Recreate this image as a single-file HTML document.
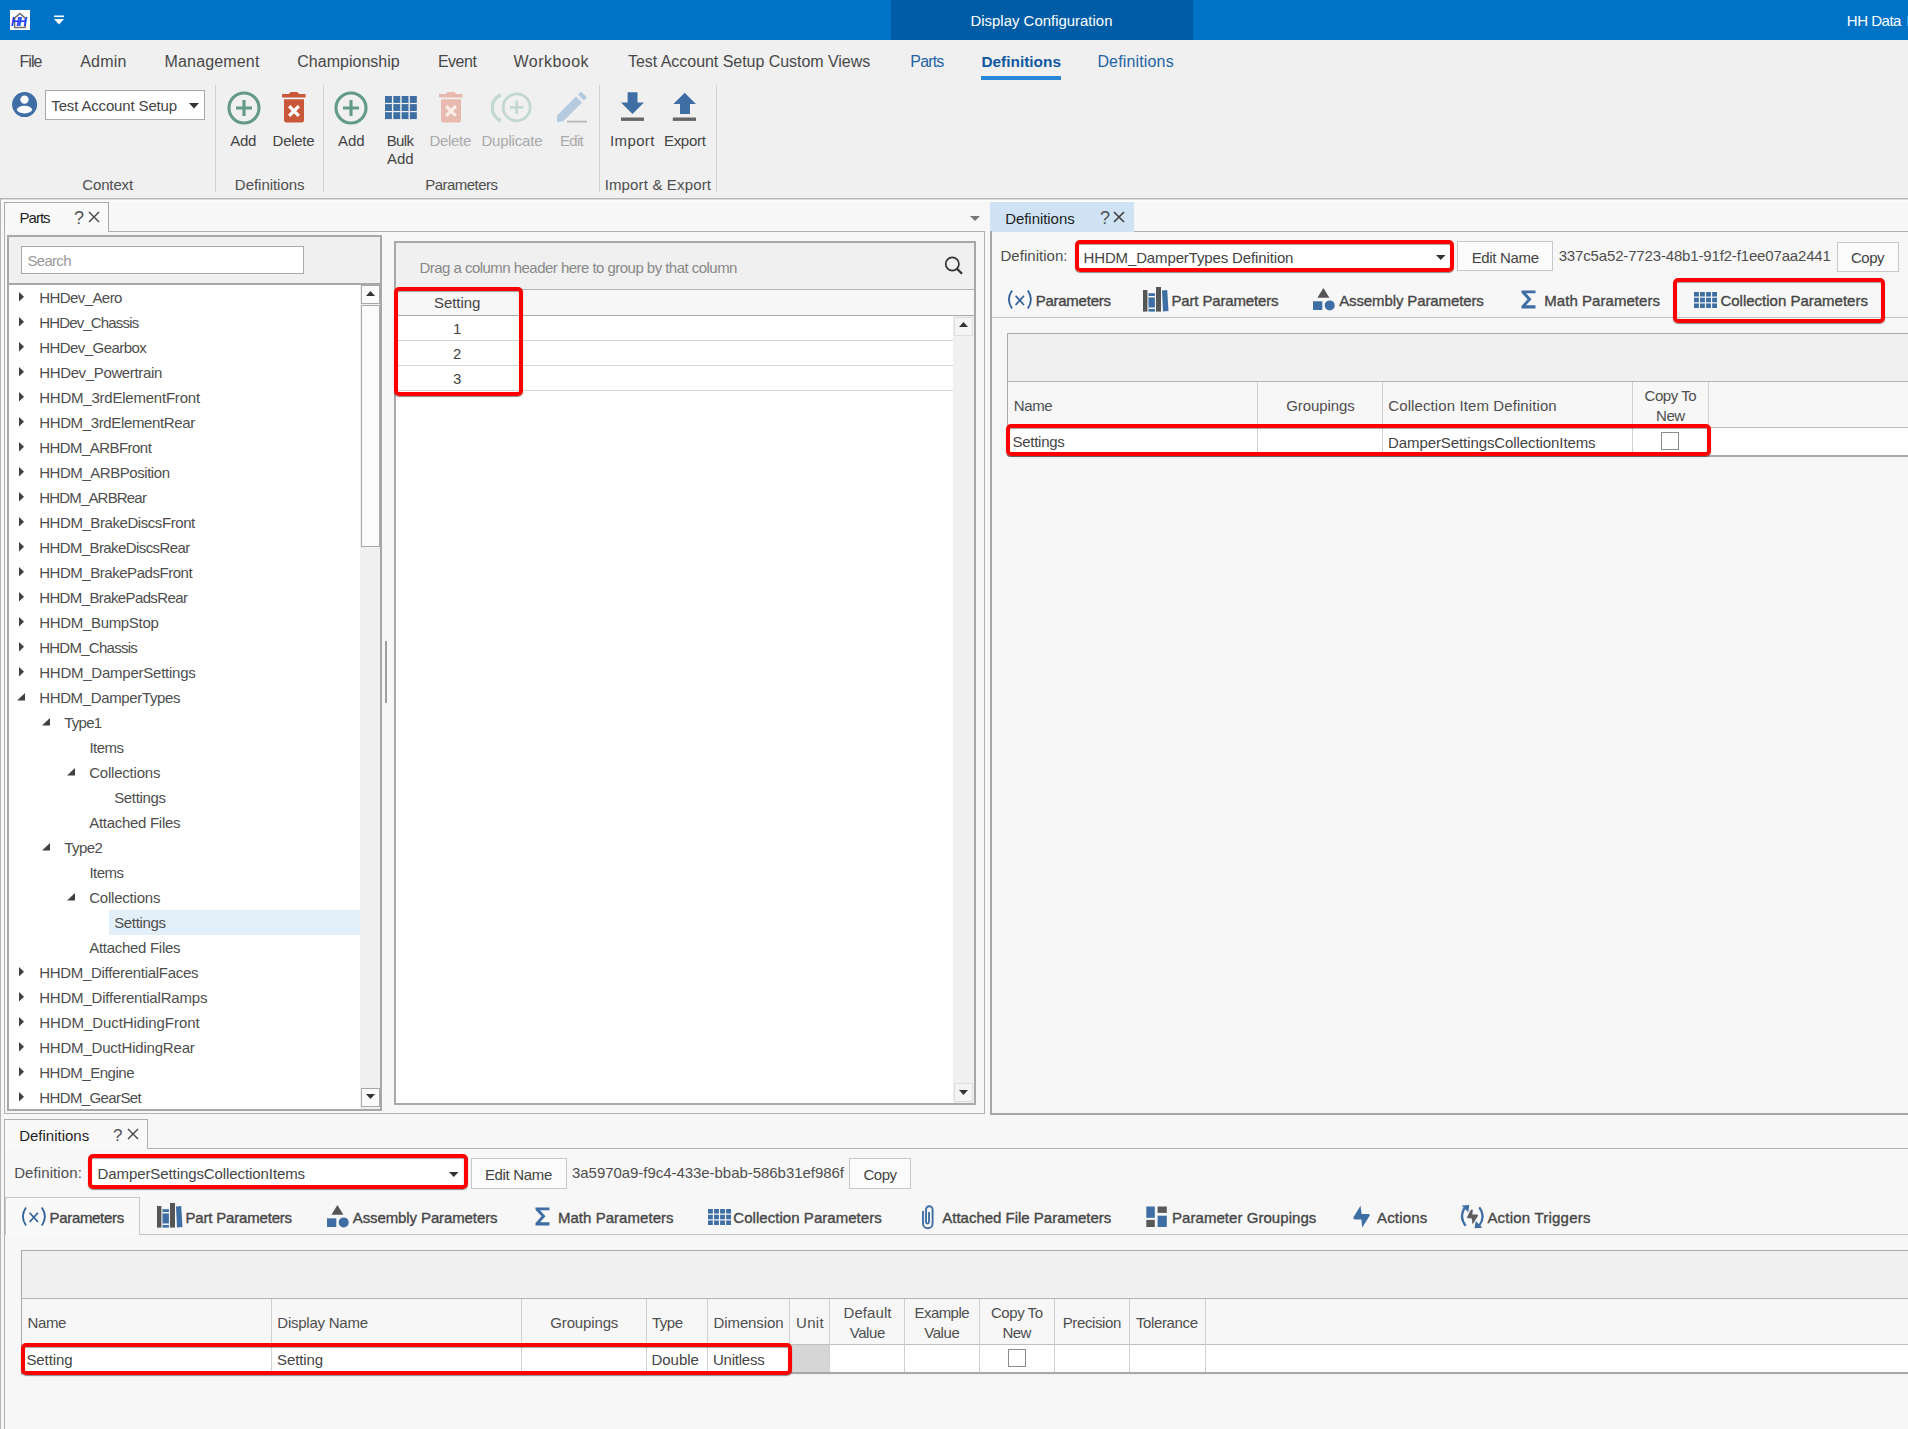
<!DOCTYPE html>
<html><head><meta charset="utf-8"><title>Display Configuration</title>
<style>
html,body{margin:0;padding:0;width:1908px;height:1429px;overflow:hidden;background:#f7f7f7;}
body{position:relative;font-family:"Liberation Sans",sans-serif;}
body>div,body>span,body>svg{position:absolute;display:block;}
body>span{white-space:nowrap;}
svg text{font-family:"Liberation Sans",sans-serif;}
</style></head><body>
<div style="left:0px;top:0px;width:1908px;height:40px;background:#0173c7"></div>
<div style="left:891px;top:0px;width:302px;height:40px;background:#005ca5"></div>
<svg style="left:10px;top:10px" width="20" height="20" viewBox="0 0 20 20"><rect x="0" y="0" width="20" height="20" fill="#fff"/><path d="M4.6 17.6 V8.2 L9.9 3.4 L15.2 8.2 V17.6 Z" fill="none" stroke="#707070" stroke-width="1.5"/><text x="1" y="15.5" font-family="Liberation Sans" font-size="12" font-weight="bold" font-style="italic" fill="#1a3cff" letter-spacing="-1.5">HH</text></svg>
<svg style="left:53px;top:15px" width="12" height="10" viewBox="0 0 12 10"><rect x="1" y="0.5" width="10" height="1.6" fill="#fff"/><path d="M1 4 L11 4 L6 9.5 Z" fill="#fff"/></svg>
<span style="left:970.50px;top:14px;font-size:14.9px;line-height:14.9px;color:#fff;letter-spacing:0.019px;">Display Configuration</span>
<span style="left:1846.80px;top:13px;font-size:15px;line-height:15px;color:#fff;letter-spacing:-0.483px;">HH Data</span>
<span style="left:1906.50px;top:13px;font-size:15px;line-height:15px;color:#fff;">M</span>
<div style="left:0px;top:40px;width:1908px;height:158px;background:#f0f0f0"></div>
<span style="left:19.50px;top:54px;font-size:16px;line-height:16px;color:#484848;letter-spacing:-0.920px;">File</span>
<span style="left:80.20px;top:54px;font-size:16px;line-height:16px;color:#484848;letter-spacing:0.235px;">Admin</span>
<span style="left:164.60px;top:54px;font-size:16px;line-height:16px;color:#484848;letter-spacing:0.149px;">Management</span>
<span style="left:297.30px;top:54px;font-size:16px;line-height:16px;color:#484848;letter-spacing:0.016px;">Championship</span>
<span style="left:437.90px;top:54px;font-size:16px;line-height:16px;color:#484848;letter-spacing:-0.470px;">Event</span>
<span style="left:513.60px;top:54px;font-size:16px;line-height:16px;color:#484848;letter-spacing:0.451px;">Workbook</span>
<span style="left:628.00px;top:54px;font-size:16px;line-height:16px;color:#484848;letter-spacing:-0.039px;">Test Account Setup Custom Views</span>
<span style="left:910.30px;top:54px;font-size:16px;line-height:16px;color:#1f63a6;letter-spacing:-0.840px;">Parts</span>
<span style="left:981.40px;top:54px;font-size:15.4px;line-height:15.4px;color:#10589f;font-weight:bold;letter-spacing:0.006px;">Definitions</span>
<div style="left:981px;top:76px;width:80px;height:4px;background:#2b88d8"></div>
<span style="left:1097.40px;top:54px;font-size:16px;line-height:16px;color:#1f63a6;letter-spacing:0.158px;">Definitions</span>
<div style="left:215px;top:85px;width:1px;height:107px;background:#d2d2d2"></div>
<div style="left:323px;top:85px;width:1px;height:107px;background:#d2d2d2"></div>
<div style="left:599px;top:85px;width:1px;height:107px;background:#d2d2d2"></div>
<div style="left:716px;top:85px;width:1px;height:107px;background:#d2d2d2"></div>
<div style="left:0px;top:198px;width:1908px;height:1px;background:#b6b6b6"></div>
<div style="left:0px;top:199px;width:1908px;height:1px;background:#dadada"></div>
<svg style="left:12px;top:92px" width="26" height="26" viewBox="0 0 26 26"><circle cx="12.6" cy="12.6" r="12.5" fill="#3e6ea3"/><circle cx="12.5" cy="7.6" r="4.2" fill="#fff"/><ellipse cx="12.5" cy="17.6" rx="7.6" ry="3.8" fill="#fff"/></svg>
<div style="left:45px;top:90px;width:158px;height:28px;background:#fff;border:1px solid #a9a9a9"></div>
<span style="left:51.30px;top:98px;font-size:15px;line-height:15px;color:#444;letter-spacing:-0.153px;">Test Account Setup</span>
<svg style="left:189px;top:103px" width="10" height="6" viewBox="0 0 10 6"><path d="M0 0 H10 L5 5.5 Z" fill="#333"/></svg>
<span style="left:82.35px;top:177px;font-size:15px;line-height:15px;color:#4e4e4e;letter-spacing:-0.162px;">Context</span>
<svg style="left:226.7px;top:90.6px" width="34" height="34" viewBox="0 0 34 34"><circle cx="17" cy="17" r="15" fill="none" stroke="#649a88" stroke-width="3.1"/><path d="M17 9 V25 M9 17 H25" stroke="#649a88" stroke-width="3.1"/></svg>
<svg style="left:282px;top:92px" width="25" height="32" viewBox="0 0 25 32"><path d="M0 1.9 H23.6 V5.6 H0 Z M6.5 2 L9 0 H15 L17.5 2 Z" fill="#c9573a"/><path d="M2 7.2 H22 V28 Q22 30.5 19.5 30.5 H4.5 Q2 30.5 2 28 Z" fill="#c9573a"/><path d="M7.2 14.2 L16.8 23.8 M16.8 14.2 L7.2 23.8" stroke="#fff" stroke-width="3.3"/></svg>
<span style="left:230.30px;top:133px;font-size:15px;line-height:15px;color:#444;letter-spacing:-0.350px;">Add</span>
<span style="left:272.60px;top:133px;font-size:15px;line-height:15px;color:#444;letter-spacing:-0.270px;">Delete</span>
<span style="left:234.85px;top:177px;font-size:15px;line-height:15px;color:#4e4e4e;letter-spacing:-0.035px;">Definitions</span>
<svg style="left:334.4px;top:90.6px" width="34" height="34" viewBox="0 0 34 34"><circle cx="17" cy="17" r="15" fill="none" stroke="#649a88" stroke-width="3.1"/><path d="M17 9 V25 M9 17 H25" stroke="#649a88" stroke-width="3.1"/></svg>
<svg style="left:385px;top:96px" width="33" height="24" viewBox="0 0 33 24"><rect x="0.0" y="0.0" width="6.9" height="6.9" fill="#3e6ea3"/><rect x="8.3" y="0.0" width="6.9" height="6.9" fill="#3e6ea3"/><rect x="16.6" y="0.0" width="6.9" height="6.9" fill="#3e6ea3"/><rect x="24.9" y="0.0" width="6.9" height="6.9" fill="#3e6ea3"/><rect x="0.0" y="8.1" width="6.9" height="6.9" fill="#3e6ea3"/><rect x="8.3" y="8.1" width="6.9" height="6.9" fill="#3e6ea3"/><rect x="16.6" y="8.1" width="6.9" height="6.9" fill="#3e6ea3"/><rect x="24.9" y="8.1" width="6.9" height="6.9" fill="#3e6ea3"/><rect x="0.0" y="16.2" width="6.9" height="6.9" fill="#3e6ea3"/><rect x="8.3" y="16.2" width="6.9" height="6.9" fill="#3e6ea3"/><rect x="16.6" y="16.2" width="6.9" height="6.9" fill="#3e6ea3"/><rect x="24.9" y="16.2" width="6.9" height="6.9" fill="#3e6ea3"/></svg>
<svg style="left:439px;top:92px" width="25" height="32" viewBox="0 0 25 32"><path d="M0 1.9 H23.6 V5.6 H0 Z M6.5 2 L9 0 H15 L17.5 2 Z" fill="#e8b9ae"/><path d="M2 7.2 H22 V28 Q22 30.5 19.5 30.5 H4.5 Q2 30.5 2 28 Z" fill="#e8b9ae"/><path d="M7.2 14.2 L16.8 23.8 M16.8 14.2 L7.2 23.8" stroke="#fbeee9" stroke-width="3.3"/></svg>
<svg style="left:491px;top:91px" width="42" height="34" viewBox="0 0 42 34"><path d="M10 3.8 A14 14 0 0 0 10 29.8" fill="none" stroke="#c3d8d0" stroke-width="3.4"/><circle cx="25.7" cy="16.3" r="13.5" fill="none" stroke="#c3d8d0" stroke-width="2.8"/><path d="M25.7 9.5 V23 M19 16.3 H32.5" stroke="#c3d8d0" stroke-width="2.8"/></svg>
<svg style="left:556px;top:92px" width="32" height="32" viewBox="0 0 32 32"><path d="M1 23.5 L20 4.5 L26 10.5 L7 29.5 L1 30 Z" fill="#b6cadf"/><path d="M22 2.5 L25 -0.5 L31 5.5 L28 8.5 Z" fill="#b6cadf"/><rect x="11" y="28.7" width="20" height="1.8" fill="#b9b9b9"/></svg>
<span style="left:338.00px;top:133px;font-size:15px;line-height:15px;color:#444;letter-spacing:-0.050px;">Add</span>
<span style="left:386.75px;top:133px;font-size:15px;line-height:15px;color:#444;letter-spacing:-0.650px;">Bulk</span>
<span style="left:387.10px;top:151px;font-size:15px;line-height:15px;color:#444;letter-spacing:-0.050px;">Add</span>
<span style="left:429.50px;top:133px;font-size:15px;line-height:15px;color:#aaa;letter-spacing:-0.310px;">Delete</span>
<span style="left:481.40px;top:133px;font-size:15px;line-height:15px;color:#aaa;letter-spacing:-0.169px;">Duplicate</span>
<span style="left:560.05px;top:133px;font-size:15px;line-height:15px;color:#aaa;letter-spacing:-0.725px;">Edit</span>
<span style="left:425.20px;top:177px;font-size:15px;line-height:15px;color:#4e4e4e;letter-spacing:-0.528px;">Parameters</span>
<svg style="left:620px;top:92px" width="26" height="30" viewBox="0 0 26 30"><path d="M7.6 0.2 H17.5 V10.5 H23.9 L12.5 21.9 L1 10.5 H7.6 Z" fill="#3e6ea3"/><rect x="1" y="25.5" width="23" height="3.4" fill="#666"/></svg>
<svg style="left:672px;top:92px" width="26" height="30" viewBox="0 0 26 30"><path d="M12.7 0.8 L24 12 H18 V21.9 H8 V12 H1.4 Z" fill="#3e6ea3"/><rect x="0.8" y="25.5" width="23.2" height="3.4" fill="#666"/></svg>
<span style="left:610.00px;top:133px;font-size:15px;line-height:15px;color:#444;letter-spacing:0.375px;">Import</span>
<span style="left:663.95px;top:133px;font-size:15px;line-height:15px;color:#444;letter-spacing:-0.290px;">Export</span>
<span style="left:604.65px;top:177px;font-size:15px;line-height:15px;color:#4e4e4e;letter-spacing:0.152px;">Import & Export</span>
<div style="left:0px;top:200px;width:1908px;height:1229px;background:#f7f7f7"></div>
<div style="left:0px;top:200px;width:1908px;height:2px;background:#fcfcfc"></div>
<div style="left:0px;top:199px;width:1px;height:1230px;background:#b4b4b4"></div>
<div style="left:4px;top:202px;width:105px;height:30px;background:#f9f9f9;border:1px solid #a8a8a8;border-bottom:none;box-sizing:border-box"></div>
<span style="left:19.60px;top:210px;font-size:15px;line-height:15px;color:#1e1e1e;letter-spacing:-1.006px;">Parts</span>
<span style="left:74.00px;top:209px;font-size:18px;line-height:18px;color:#505050;">?</span>
<svg style="left:88px;top:211px" width="12" height="12" viewBox="0 0 12 12"><path d="M1 1 L11 11 M11 1 L1 11" stroke="#444" stroke-width="1.4"/></svg>
<div style="left:108px;top:231px;width:877px;height:1px;background:#b0b0b0"></div>
<div style="left:4px;top:231px;width:1px;height:883px;background:#b0b0b0"></div>
<div style="left:984px;top:231px;width:1px;height:883px;background:#b0b0b0"></div>
<div style="left:4px;top:1113px;width:981px;height:1px;background:#b0b0b0"></div>
<svg style="left:970px;top:216px" width="10" height="6" viewBox="0 0 10 6"><path d="M0 0 H10 L5 5 Z" fill="#777"/></svg>
<div style="left:7px;top:235px;width:375px;height:876px;background:#f0f0f0;border:2px solid #a8a8a8;box-sizing:border-box"></div>
<div style="left:9px;top:284px;width:351px;height:825px;background:#fff"></div>
<div style="left:9px;top:283px;width:372px;height:2px;background:#a8a8a8"></div>
<div style="left:21px;top:246px;width:283px;height:28px;background:#fff;border:1px solid #a9a9a9;box-sizing:border-box"></div>
<span style="left:27.50px;top:253px;font-size:15px;line-height:15px;color:#999;letter-spacing:-0.710px;">Search</span>
<div style="left:360px;top:285px;width:20px;height:824px;background:#f0f0f0"></div>
<div style="left:361px;top:285px;width:19px;height:19px;background:#fbfbfb;border:1px solid #a8a8a8;box-sizing:border-box"></div>
<svg style="left:366px;top:291px" width="10" height="6" viewBox="0 0 10 6"><path d="M0 5 H9 L4.5 0 Z" fill="#333"/></svg>
<div style="left:361px;top:305px;width:19px;height:242px;background:#fbfbfb;border:1px solid #a8a8a8;box-sizing:border-box"></div>
<div style="left:361px;top:1088px;width:19px;height:19px;background:#fbfbfb;border:1px solid #a8a8a8;box-sizing:border-box"></div>
<svg style="left:366px;top:1094px" width="10" height="6" viewBox="0 0 10 6"><path d="M0 0 H9 L4.5 5 Z" fill="#333"/></svg>
<div style="left:385px;top:641px;width:2px;height:62px;background:#a0a0a0"></div>
<svg style="left:19px;top:291.5px" width="6" height="10" viewBox="0 0 6 10"><path d="M0 0 L5 4.7 L0 9.5 Z" fill="#404040"/></svg>
<span style="left:39.20px;top:290px;font-size:15px;line-height:15px;color:#4e4e4e;letter-spacing:-0.572px;">HHDev_Aero</span>
<svg style="left:19px;top:316.5px" width="6" height="10" viewBox="0 0 6 10"><path d="M0 0 L5 4.7 L0 9.5 Z" fill="#404040"/></svg>
<span style="left:39.20px;top:315px;font-size:15px;line-height:15px;color:#4e4e4e;letter-spacing:-0.835px;">HHDev_Chassis</span>
<svg style="left:19px;top:341.5px" width="6" height="10" viewBox="0 0 6 10"><path d="M0 0 L5 4.7 L0 9.5 Z" fill="#404040"/></svg>
<span style="left:39.20px;top:340px;font-size:15px;line-height:15px;color:#4e4e4e;letter-spacing:-0.544px;">HHDev_Gearbox</span>
<svg style="left:19px;top:366.5px" width="6" height="10" viewBox="0 0 6 10"><path d="M0 0 L5 4.7 L0 9.5 Z" fill="#404040"/></svg>
<span style="left:39.20px;top:365px;font-size:15px;line-height:15px;color:#4e4e4e;letter-spacing:-0.353px;">HHDev_Powertrain</span>
<svg style="left:19px;top:391.5px" width="6" height="10" viewBox="0 0 6 10"><path d="M0 0 L5 4.7 L0 9.5 Z" fill="#404040"/></svg>
<span style="left:39.20px;top:390px;font-size:15px;line-height:15px;color:#4e4e4e;letter-spacing:-0.220px;">HHDM_3rdElementFront</span>
<svg style="left:19px;top:416.5px" width="6" height="10" viewBox="0 0 6 10"><path d="M0 0 L5 4.7 L0 9.5 Z" fill="#404040"/></svg>
<span style="left:39.20px;top:415px;font-size:15px;line-height:15px;color:#4e4e4e;letter-spacing:-0.363px;">HHDM_3rdElementRear</span>
<svg style="left:19px;top:441.5px" width="6" height="10" viewBox="0 0 6 10"><path d="M0 0 L5 4.7 L0 9.5 Z" fill="#404040"/></svg>
<span style="left:39.20px;top:440px;font-size:15px;line-height:15px;color:#4e4e4e;letter-spacing:-0.548px;">HHDM_ARBFront</span>
<svg style="left:19px;top:466.5px" width="6" height="10" viewBox="0 0 6 10"><path d="M0 0 L5 4.7 L0 9.5 Z" fill="#404040"/></svg>
<span style="left:39.20px;top:465px;font-size:15px;line-height:15px;color:#4e4e4e;letter-spacing:-0.450px;">HHDM_ARBPosition</span>
<svg style="left:19px;top:491.5px" width="6" height="10" viewBox="0 0 6 10"><path d="M0 0 L5 4.7 L0 9.5 Z" fill="#404040"/></svg>
<span style="left:39.20px;top:490px;font-size:15px;line-height:15px;color:#4e4e4e;letter-spacing:-0.818px;">HHDM_ARBRear</span>
<svg style="left:19px;top:516.5px" width="6" height="10" viewBox="0 0 6 10"><path d="M0 0 L5 4.7 L0 9.5 Z" fill="#404040"/></svg>
<span style="left:39.20px;top:515px;font-size:15px;line-height:15px;color:#4e4e4e;letter-spacing:-0.430px;">HHDM_BrakeDiscsFront</span>
<svg style="left:19px;top:541.5px" width="6" height="10" viewBox="0 0 6 10"><path d="M0 0 L5 4.7 L0 9.5 Z" fill="#404040"/></svg>
<span style="left:39.20px;top:540px;font-size:15px;line-height:15px;color:#4e4e4e;letter-spacing:-0.594px;">HHDM_BrakeDiscsRear</span>
<svg style="left:19px;top:566.5px" width="6" height="10" viewBox="0 0 6 10"><path d="M0 0 L5 4.7 L0 9.5 Z" fill="#404040"/></svg>
<span style="left:39.20px;top:565px;font-size:15px;line-height:15px;color:#4e4e4e;letter-spacing:-0.461px;">HHDM_BrakePadsFront</span>
<svg style="left:19px;top:591.5px" width="6" height="10" viewBox="0 0 6 10"><path d="M0 0 L5 4.7 L0 9.5 Z" fill="#404040"/></svg>
<span style="left:39.20px;top:590px;font-size:15px;line-height:15px;color:#4e4e4e;letter-spacing:-0.619px;">HHDM_BrakePadsRear</span>
<svg style="left:19px;top:616.5px" width="6" height="10" viewBox="0 0 6 10"><path d="M0 0 L5 4.7 L0 9.5 Z" fill="#404040"/></svg>
<span style="left:39.20px;top:615px;font-size:15px;line-height:15px;color:#4e4e4e;letter-spacing:-0.315px;">HHDM_BumpStop</span>
<svg style="left:19px;top:641.5px" width="6" height="10" viewBox="0 0 6 10"><path d="M0 0 L5 4.7 L0 9.5 Z" fill="#404040"/></svg>
<span style="left:39.20px;top:640px;font-size:15px;line-height:15px;color:#4e4e4e;letter-spacing:-0.739px;">HHDM_Chassis</span>
<svg style="left:19px;top:666.5px" width="6" height="10" viewBox="0 0 6 10"><path d="M0 0 L5 4.7 L0 9.5 Z" fill="#404040"/></svg>
<span style="left:39.20px;top:665px;font-size:15px;line-height:15px;color:#4e4e4e;letter-spacing:-0.237px;">HHDM_DamperSettings</span>
<svg style="left:17px;top:692.5px" width="9" height="8" viewBox="0 0 9 8"><path d="M8 0 V7.5 H0 Z" fill="#404040"/></svg>
<span style="left:39.20px;top:690px;font-size:15px;line-height:15px;color:#4e4e4e;letter-spacing:-0.360px;">HHDM_DamperTypes</span>
<svg style="left:42px;top:717.5px" width="9" height="8" viewBox="0 0 9 8"><path d="M8 0 V7.5 H0 Z" fill="#404040"/></svg>
<span style="left:64.20px;top:715px;font-size:15px;line-height:15px;color:#4e4e4e;letter-spacing:-0.744px;">Type1</span>
<span style="left:89.50px;top:740px;font-size:15px;line-height:15px;color:#4e4e4e;letter-spacing:-0.544px;">Items</span>
<svg style="left:67px;top:767.5px" width="9" height="8" viewBox="0 0 9 8"><path d="M8 0 V7.5 H0 Z" fill="#404040"/></svg>
<span style="left:89.20px;top:765px;font-size:15px;line-height:15px;color:#4e4e4e;letter-spacing:-0.215px;">Collections</span>
<span style="left:114.20px;top:790px;font-size:15px;line-height:15px;color:#4e4e4e;letter-spacing:-0.346px;">Settings</span>
<span style="left:89.20px;top:815px;font-size:15px;line-height:15px;color:#4e4e4e;letter-spacing:-0.287px;">Attached Files</span>
<svg style="left:42px;top:842.5px" width="9" height="8" viewBox="0 0 9 8"><path d="M8 0 V7.5 H0 Z" fill="#404040"/></svg>
<span style="left:64.20px;top:840px;font-size:15px;line-height:15px;color:#4e4e4e;letter-spacing:-0.569px;">Type2</span>
<span style="left:89.50px;top:865px;font-size:15px;line-height:15px;color:#4e4e4e;letter-spacing:-0.544px;">Items</span>
<svg style="left:67px;top:892.5px" width="9" height="8" viewBox="0 0 9 8"><path d="M8 0 V7.5 H0 Z" fill="#404040"/></svg>
<span style="left:89.20px;top:890px;font-size:15px;line-height:15px;color:#4e4e4e;letter-spacing:-0.215px;">Collections</span>
<div style="left:109px;top:910px;width:251px;height:25px;background:#e3eff9"></div>
<span style="left:114.20px;top:915px;font-size:15px;line-height:15px;color:#4e4e4e;letter-spacing:-0.346px;">Settings</span>
<span style="left:89.20px;top:940px;font-size:15px;line-height:15px;color:#4e4e4e;letter-spacing:-0.287px;">Attached Files</span>
<svg style="left:19px;top:966.5px" width="6" height="10" viewBox="0 0 6 10"><path d="M0 0 L5 4.7 L0 9.5 Z" fill="#404040"/></svg>
<span style="left:39.20px;top:965px;font-size:15px;line-height:15px;color:#4e4e4e;letter-spacing:-0.300px;">HHDM_DifferentialFaces</span>
<svg style="left:19px;top:991.5px" width="6" height="10" viewBox="0 0 6 10"><path d="M0 0 L5 4.7 L0 9.5 Z" fill="#404040"/></svg>
<span style="left:39.20px;top:990px;font-size:15px;line-height:15px;color:#4e4e4e;letter-spacing:-0.194px;">HHDM_DifferentialRamps</span>
<svg style="left:19px;top:1016.5px" width="6" height="10" viewBox="0 0 6 10"><path d="M0 0 L5 4.7 L0 9.5 Z" fill="#404040"/></svg>
<span style="left:39.20px;top:1015px;font-size:15px;line-height:15px;color:#4e4e4e;letter-spacing:-0.068px;">HHDM_DuctHidingFront</span>
<svg style="left:19px;top:1041.5px" width="6" height="10" viewBox="0 0 6 10"><path d="M0 0 L5 4.7 L0 9.5 Z" fill="#404040"/></svg>
<span style="left:39.20px;top:1040px;font-size:15px;line-height:15px;color:#4e4e4e;letter-spacing:-0.201px;">HHDM_DuctHidingRear</span>
<svg style="left:19px;top:1066.5px" width="6" height="10" viewBox="0 0 6 10"><path d="M0 0 L5 4.7 L0 9.5 Z" fill="#404040"/></svg>
<span style="left:39.20px;top:1065px;font-size:15px;line-height:15px;color:#4e4e4e;letter-spacing:-0.475px;">HHDM_Engine</span>
<svg style="left:19px;top:1091.5px" width="6" height="10" viewBox="0 0 6 10"><path d="M0 0 L5 4.7 L0 9.5 Z" fill="#404040"/></svg>
<span style="left:39.20px;top:1090px;font-size:15px;line-height:15px;color:#4e4e4e;letter-spacing:-0.600px;">HHDM_GearSet</span>
<div style="left:394px;top:241px;width:582px;height:864px;background:#fff;border:2px solid #a8a8a8;box-sizing:border-box"></div>
<div style="left:396px;top:243px;width:578px;height:46px;background:#f0f0f0"></div>
<div style="left:396px;top:289px;width:578px;height:1px;background:#b4b4b4"></div>
<span style="left:419.50px;top:260px;font-size:15px;line-height:15px;color:#888;letter-spacing:-0.533px;">Drag a column header here to group by that column</span>
<svg style="left:943px;top:255px" width="22" height="22" viewBox="0 0 22 22"><circle cx="9.3" cy="9" r="6.6" fill="none" stroke="#333" stroke-width="1.7"/><path d="M14 13.8 L19 18.8" stroke="#333" stroke-width="2.3"/></svg>
<div style="left:396px;top:290px;width:578px;height:25px;background:#f7f7f7"></div>
<div style="left:396px;top:315px;width:578px;height:1px;background:#a8a8a8"></div>
<div style="left:520px;top:290px;width:1px;height:101px;background:#d0d0d0"></div>
<span style="left:434.10px;top:295px;font-size:15px;line-height:15px;color:#444;letter-spacing:-0.087px;">Setting</span>
<span style="left:453.04px;top:321px;font-size:15px;line-height:15px;color:#444;">1</span>
<div style="left:396px;top:340px;width:557px;height:1px;background:#d4d4d4"></div>
<span style="left:453.04px;top:346px;font-size:15px;line-height:15px;color:#444;">2</span>
<div style="left:396px;top:365px;width:557px;height:1px;background:#d4d4d4"></div>
<span style="left:453.04px;top:371px;font-size:15px;line-height:15px;color:#444;">3</span>
<div style="left:396px;top:390px;width:557px;height:1px;background:#d4d4d4"></div>
<div style="left:953px;top:316px;width:21px;height:787px;background:#f0f0f0"></div>
<div style="left:954px;top:317px;width:19px;height:19px;background:#f4f4f4;border:1px solid #dedede;box-sizing:border-box"></div>
<svg style="left:959px;top:322px" width="10" height="6" viewBox="0 0 10 6"><path d="M0 5 H9 L4.5 0 Z" fill="#333"/></svg>
<div style="left:954px;top:1083px;width:19px;height:19px;background:#f4f4f4;border:1px solid #dedede;box-sizing:border-box"></div>
<svg style="left:959px;top:1090px" width="10" height="6" viewBox="0 0 10 6"><path d="M0 0 H9 L4.5 5 Z" fill="#333"/></svg>
<div style="left:394px;top:287px;width:121px;height:101px;border:4px solid #ff0000;border-radius:5px;box-shadow:0 1px 1px rgba(0,0,0,.45), inset 0 1px 1px rgba(0,0,0,.35)"></div>
<div style="left:990px;top:202px;width:144px;height:30px;background:#cfe3f5"></div>
<span style="left:1005.20px;top:211px;font-size:15px;line-height:15px;color:#1e1e1e;letter-spacing:-0.055px;">Definitions</span>
<span style="left:1100.00px;top:209px;font-size:18px;line-height:18px;color:#505050;">?</span>
<svg style="left:1113px;top:211px" width="12" height="12" viewBox="0 0 12 12"><path d="M1 1 L11 11 M11 1 L1 11" stroke="#404040" stroke-width="1.6"/></svg>
<div style="left:1134px;top:231px;width:774px;height:1px;background:#b0b0b0"></div>
<div style="left:990px;top:231px;width:2px;height:883px;background:#a8a8a8"></div>
<div style="left:990px;top:1113px;width:918px;height:2px;background:#a8a8a8"></div>
<span style="left:1000.50px;top:248px;font-size:15px;line-height:15px;color:#4e4e4e;letter-spacing:0.033px;">Definition:</span>
<div style="left:1079px;top:244px;width:371px;height:25px;background:#fff"></div>
<span style="left:1083.50px;top:250px;font-size:15px;line-height:15px;color:#444;letter-spacing:-0.133px;">HHDM_DamperTypes Definition</span>
<svg style="left:1436px;top:255px" width="10" height="6" viewBox="0 0 10 6"><path d="M0 0 H9.5 L4.75 5 Z" fill="#333"/></svg>
<div style="left:1075px;top:240px;width:371px;height:24px;border:4px solid #ff0000;border-radius:5px;box-shadow:0 1px 1px rgba(0,0,0,.45), inset 0 1px 1px rgba(0,0,0,.35)"></div>
<div style="left:1457px;top:241px;width:96px;height:30px;background:#fbfbfb;border:1px solid #c8c8c8;box-sizing:border-box"></div>
<span style="left:1471.70px;top:250px;font-size:15px;line-height:15px;color:#444;letter-spacing:-0.331px;">Edit Name</span>
<span style="left:1558.70px;top:248px;font-size:15px;line-height:15px;color:#4e4e4e;letter-spacing:-0.158px;">337c5a52-7723-48b1-91f2-f1ee07aa2441</span>
<div style="left:1837px;top:242px;width:62px;height:30px;background:#fbfbfb;border:1px solid #c8c8c8;box-sizing:border-box"></div>
<span style="left:1851.00px;top:250px;font-size:15px;line-height:15px;color:#444;letter-spacing:-0.475px;">Copy</span>
<div style="left:992px;top:317px;width:916px;height:1px;background:#c4c4c4"></div>
<svg style="left:1005px;top:289px" width="30" height="21" viewBox="0 0 30 21"><path d="M7 1.5 Q0.8 10.5 7 19.5 M22.8 1.5 Q29 10.5 22.8 19.5" fill="none" stroke="#30609a" stroke-width="1.8"/><path d="M10.6 6.8 L19 16 M19 6.8 L10.6 16" stroke="#30609a" stroke-width="1.7"/></svg>
<span style="left:1035.70px;top:293px;font-size:15px;line-height:15px;color:#464646;letter-spacing:-0.250px;-webkit-text-stroke:0.35px #464646;">Parameters</span>
<svg style="left:1143px;top:287px" width="27" height="26" viewBox="0 0 27 26"><rect x="0" y="3" width="4.4" height="21.6" fill="#555"/><rect x="5.5" y="6.2" width="6.4" height="18.4" fill="#3e6ea3"/><rect x="5.5" y="9" width="6.4" height="1.4" fill="#fff"/><rect x="5.5" y="20.5" width="6.4" height="1.4" fill="#fff"/><rect x="13" y="0" width="5" height="24.6" fill="#555"/><path d="M19 3.5 L24.2 3 L25.5 24 L20 24.6 Z" fill="#3e6ea3"/></svg>
<span style="left:1171.50px;top:293px;font-size:15px;line-height:15px;color:#464646;letter-spacing:-0.157px;-webkit-text-stroke:0.35px #464646;">Part Parameters</span>
<svg style="left:1313px;top:288px" width="24" height="24" viewBox="0 0 24 24"><path d="M10.4 0 L16.4 9.8 H4.4 Z" fill="#555"/><rect x="0" y="13.3" width="9.3" height="8.7" fill="#3e6ea3"/><circle cx="16.7" cy="17.4" r="5" fill="#3e6ea3"/></svg>
<span style="left:1339.20px;top:293px;font-size:15px;line-height:15px;color:#464646;letter-spacing:-0.117px;-webkit-text-stroke:0.35px #464646;">Assembly Parameters</span>
<svg style="left:1521px;top:290px" width="16" height="20" viewBox="0 0 16 20"><path d="M0.5 0.5 H14.5 V3.3 H5 L10.5 9.3 L5 15.3 H14.5 V18.5 H0.5 V16 L6.6 9.3 L0.5 2.8 Z" fill="#3e6ea3"/></svg>
<span style="left:1544.30px;top:293px;font-size:15px;line-height:15px;color:#464646;letter-spacing:0.046px;-webkit-text-stroke:0.35px #464646;">Math Parameters</span>
<svg style="left:1694px;top:292px" width="23" height="16" viewBox="0 0 23 16"><rect x="0.00" y="0.00" width="4.85" height="4.53" fill="#3e6ea3"/><rect x="6.05" y="0.00" width="4.85" height="4.53" fill="#3e6ea3"/><rect x="12.10" y="0.00" width="4.85" height="4.53" fill="#3e6ea3"/><rect x="18.15" y="0.00" width="4.85" height="4.53" fill="#3e6ea3"/><rect x="0.00" y="5.73" width="4.85" height="4.53" fill="#3e6ea3"/><rect x="6.05" y="5.73" width="4.85" height="4.53" fill="#3e6ea3"/><rect x="12.10" y="5.73" width="4.85" height="4.53" fill="#3e6ea3"/><rect x="18.15" y="5.73" width="4.85" height="4.53" fill="#3e6ea3"/><rect x="0.00" y="11.47" width="4.85" height="4.53" fill="#3e6ea3"/><rect x="6.05" y="11.47" width="4.85" height="4.53" fill="#3e6ea3"/><rect x="12.10" y="11.47" width="4.85" height="4.53" fill="#3e6ea3"/><rect x="18.15" y="11.47" width="4.85" height="4.53" fill="#3e6ea3"/></svg>
<span style="left:1720.40px;top:293px;font-size:15px;line-height:15px;color:#464646;-webkit-text-stroke:0.35px #464646;">Collection Parameters</span>
<div style="left:1673px;top:278px;width:204px;height:37px;border:4px solid #ff0000;border-radius:5px;box-shadow:0 1px 1px rgba(0,0,0,.45), inset 0 1px 1px rgba(0,0,0,.35)"></div>
<div style="left:1007px;top:333px;width:901px;height:123px;border-left:1px solid #ababab;border-top:1px solid #ababab;background:#f0f0f0;box-sizing:border-box"></div>
<div style="left:1008px;top:381px;width:900px;height:1px;background:#b4b4b4"></div>
<div style="left:1008px;top:382px;width:900px;height:45px;background:#f7f7f7"></div>
<div style="left:1008px;top:427px;width:900px;height:1px;background:#c0c0c0"></div>
<div style="left:1008px;top:428px;width:900px;height:27px;background:#fff"></div>
<div style="left:1008px;top:455px;width:900px;height:2px;background:#a8a8a8"></div>
<div style="left:1257px;top:382px;width:1px;height:73px;background:#d0d0d0"></div>
<div style="left:1382px;top:382px;width:1px;height:73px;background:#d0d0d0"></div>
<div style="left:1632px;top:382px;width:1px;height:73px;background:#d0d0d0"></div>
<div style="left:1708px;top:382px;width:1px;height:73px;background:#d0d0d0"></div>
<span style="left:1013.70px;top:398px;font-size:15px;line-height:15px;color:#4e4e4e;letter-spacing:-0.350px;">Name</span>
<span style="left:1286.20px;top:398px;font-size:15px;line-height:15px;color:#4e4e4e;letter-spacing:-0.078px;">Groupings</span>
<span style="left:1388.30px;top:398px;font-size:15px;line-height:15px;color:#4e4e4e;letter-spacing:0.100px;">Collection Item Definition</span>
<span style="left:1644.60px;top:388px;font-size:15px;line-height:15px;color:#4e4e4e;letter-spacing:-0.458px;">Copy To</span>
<span style="left:1656.10px;top:408px;font-size:15px;line-height:15px;color:#4e4e4e;letter-spacing:-0.537px;">New</span>
<span style="left:1012.40px;top:434px;font-size:15px;line-height:15px;color:#444;letter-spacing:-0.246px;">Settings</span>
<span style="left:1388.00px;top:435px;font-size:15px;line-height:15px;color:#444;letter-spacing:-0.088px;">DamperSettingsCollectionItems</span>
<div style="left:1661px;top:432px;width:18px;height:18px;background:#fff;border:1px solid #8c8c8c;box-sizing:border-box"></div>
<div style="left:1006px;top:424px;width:697px;height:24px;border:4px solid #ff0000;border-radius:5px;box-shadow:0 1px 1px rgba(0,0,0,.45), inset 0 1px 1px rgba(0,0,0,.35)"></div>
<div style="left:4px;top:1119px;width:144px;height:30px;background:#f9f9f9;border:1px solid #b0b0b0;border-bottom:none;box-sizing:border-box"></div>
<span style="left:19.20px;top:1128px;font-size:15px;line-height:15px;color:#1e1e1e;letter-spacing:-0.005px;">Definitions</span>
<span style="left:113.00px;top:1127px;font-size:17px;line-height:17px;color:#505050;">?</span>
<svg style="left:127px;top:1128px" width="12" height="12" viewBox="0 0 12 12"><path d="M1 1 L11 11 M11 1 L1 11" stroke="#444" stroke-width="1.4"/></svg>
<div style="left:147px;top:1148px;width:1761px;height:1px;background:#b0b0b0"></div>
<div style="left:4px;top:1148px;width:1px;height:281px;background:#b0b0b0"></div>
<span style="left:14.20px;top:1165px;font-size:15px;line-height:15px;color:#4e4e4e;letter-spacing:0.092px;">Definition:</span>
<div style="left:92px;top:1158px;width:370px;height:28px;background:#fff"></div>
<span style="left:97.50px;top:1166px;font-size:15px;line-height:15px;color:#444;letter-spacing:-0.088px;">DamperSettingsCollectionItems</span>
<svg style="left:449px;top:1172px" width="10" height="6" viewBox="0 0 10 6"><path d="M0 0 H9.5 L4.75 5 Z" fill="#333"/></svg>
<div style="left:88px;top:1154px;width:372px;height:27px;border:4px solid #ff0000;border-radius:5px;box-shadow:0 1px 1px rgba(0,0,0,.45), inset 0 1px 1px rgba(0,0,0,.35)"></div>
<div style="left:471px;top:1158px;width:96px;height:31px;background:#fbfbfb;border:1px solid #c8c8c8;box-sizing:border-box"></div>
<span style="left:484.90px;top:1167px;font-size:15px;line-height:15px;color:#444;letter-spacing:-0.331px;">Edit Name</span>
<span style="left:572.00px;top:1165px;font-size:15px;line-height:15px;color:#4e4e4e;letter-spacing:-0.046px;">3a5970a9-f9c4-433e-bbab-586b31ef986f</span>
<div style="left:849px;top:1158px;width:62px;height:31px;background:#fbfbfb;border:1px solid #c8c8c8;box-sizing:border-box"></div>
<span style="left:863.50px;top:1167px;font-size:15px;line-height:15px;color:#444;letter-spacing:-0.475px;">Copy</span>
<div style="left:5px;top:1197px;width:135px;height:38px;background:#f9f9f9;border:1px solid #c8c8c8;border-bottom:none;box-sizing:border-box"></div>
<div style="left:139px;top:1234px;width:1769px;height:1px;background:#c4c4c4"></div>
<svg style="left:19px;top:1206px" width="30" height="21" viewBox="0 0 30 21"><path d="M7 1.5 Q0.8 10.5 7 19.5 M22.8 1.5 Q29 10.5 22.8 19.5" fill="none" stroke="#30609a" stroke-width="1.8"/><path d="M10.6 6.8 L19 16 M19 6.8 L10.6 16" stroke="#30609a" stroke-width="1.7"/></svg>
<span style="left:49.50px;top:1210px;font-size:15px;line-height:15px;color:#464646;letter-spacing:-0.317px;-webkit-text-stroke:0.35px #464646;">Parameters</span>
<svg style="left:157px;top:1203px" width="27" height="26" viewBox="0 0 27 26"><rect x="0" y="3" width="4.4" height="21.6" fill="#555"/><rect x="5.5" y="6.2" width="6.4" height="18.4" fill="#3e6ea3"/><rect x="5.5" y="9" width="6.4" height="1.4" fill="#fff"/><rect x="5.5" y="20.5" width="6.4" height="1.4" fill="#fff"/><rect x="13" y="0" width="5" height="24.6" fill="#555"/><path d="M19 3.5 L24.2 3 L25.5 24 L20 24.6 Z" fill="#3e6ea3"/></svg>
<span style="left:185.50px;top:1210px;font-size:15px;line-height:15px;color:#464646;letter-spacing:-0.186px;-webkit-text-stroke:0.35px #464646;">Part Parameters</span>
<svg style="left:327px;top:1205px" width="24" height="24" viewBox="0 0 24 24"><path d="M10.4 0 L16.4 9.8 H4.4 Z" fill="#555"/><rect x="0" y="13.3" width="9.3" height="8.7" fill="#3e6ea3"/><circle cx="16.7" cy="17.4" r="5" fill="#3e6ea3"/></svg>
<span style="left:352.80px;top:1210px;font-size:15px;line-height:15px;color:#464646;letter-spacing:-0.111px;-webkit-text-stroke:0.35px #464646;">Assembly Parameters</span>
<svg style="left:535px;top:1207px" width="16" height="20" viewBox="0 0 16 20"><path d="M0.5 0.5 H14.5 V3.3 H5 L10.5 9.3 L5 15.3 H14.5 V18.5 H0.5 V16 L6.6 9.3 L0.5 2.8 Z" fill="#3e6ea3"/></svg>
<span style="left:557.90px;top:1210px;font-size:15px;line-height:15px;color:#464646;letter-spacing:0.046px;-webkit-text-stroke:0.35px #464646;">Math Parameters</span>
<svg style="left:708px;top:1209px" width="23" height="16" viewBox="0 0 23 16"><rect x="0.00" y="0.00" width="4.85" height="4.53" fill="#3e6ea3"/><rect x="6.05" y="0.00" width="4.85" height="4.53" fill="#3e6ea3"/><rect x="12.10" y="0.00" width="4.85" height="4.53" fill="#3e6ea3"/><rect x="18.15" y="0.00" width="4.85" height="4.53" fill="#3e6ea3"/><rect x="0.00" y="5.73" width="4.85" height="4.53" fill="#3e6ea3"/><rect x="6.05" y="5.73" width="4.85" height="4.53" fill="#3e6ea3"/><rect x="12.10" y="5.73" width="4.85" height="4.53" fill="#3e6ea3"/><rect x="18.15" y="5.73" width="4.85" height="4.53" fill="#3e6ea3"/><rect x="0.00" y="11.47" width="4.85" height="4.53" fill="#3e6ea3"/><rect x="6.05" y="11.47" width="4.85" height="4.53" fill="#3e6ea3"/><rect x="12.10" y="11.47" width="4.85" height="4.53" fill="#3e6ea3"/><rect x="18.15" y="11.47" width="4.85" height="4.53" fill="#3e6ea3"/></svg>
<span style="left:733.30px;top:1210px;font-size:15px;line-height:15px;color:#464646;letter-spacing:0.045px;-webkit-text-stroke:0.35px #464646;">Collection Parameters</span>
<svg style="left:919px;top:1203px" width="18" height="28" viewBox="0 0 18 28"><path d="M4 8 V20.5 A4.8 4.8 0 0 0 13.6 20.5 V6.5 A3.3 3.3 0 0 0 7 6.5 V19 A1.5 1.5 0 0 0 10 19 V9" fill="none" stroke="#3e6ea3" stroke-width="1.9"/></svg>
<span style="left:942.30px;top:1210px;font-size:15px;line-height:15px;color:#464646;letter-spacing:-0.012px;-webkit-text-stroke:0.35px #464646;">Attached File Parameters</span>
<svg style="left:1146px;top:1206px" width="22" height="22" viewBox="0 0 22 22"><rect x="0.3" y="0.5" width="8.5" height="11.3" fill="#3e6ea3"/><rect x="11.6" y="0.5" width="9.2" height="6.4" fill="#595959"/><rect x="0.3" y="13.9" width="8.5" height="7.1" fill="#595959"/><rect x="11.6" y="9.7" width="9.2" height="11.3" fill="#3e6ea3"/></svg>
<span style="left:1172.00px;top:1210px;font-size:15px;line-height:15px;color:#464646;letter-spacing:0.050px;-webkit-text-stroke:0.35px #464646;">Parameter Groupings</span>
<svg style="left:1352px;top:1205px" width="20" height="24" viewBox="0 0 20 24"><path d="M8.5 0.8 L1.3 12.6 Q1.3 14.4 3 14.4 H9.4 L10.2 22.4 L17.9 10.3 Q17.8 8.9 16.3 8.9 H9.6 Z" fill="#3e6ea3"/></svg>
<span style="left:1377.00px;top:1210px;font-size:15px;line-height:15px;color:#464646;letter-spacing:0.167px;-webkit-text-stroke:0.35px #464646;">Actions</span>
<svg style="left:1458px;top:1204px" width="30" height="26" viewBox="0 0 30 26"><path d="M6.8 3.5 Q0.8 12.5 7.6 21.8" fill="none" stroke="#3e6ea3" stroke-width="2.3"/><path d="M3.8 1.6 L11.3 1.0 L10.2 8.3 Z" fill="#3e6ea3"/><path d="M21.2 3.2 Q28.2 12.3 21.2 21.6" fill="none" stroke="#3e6ea3" stroke-width="2.3"/><path d="M24.3 23.8 L16.6 24.2 L17.8 17 Z" fill="#3e6ea3"/><path d="M12.8 5.7 L9 13.2 Q9 14.3 10 14.3 H13.6 L14.6 20.4 L20 11.8 Q20 10.6 19 10.6 H14.4 L14.8 5.7 Z" fill="#5e5e5e"/></svg>
<span style="left:1487.40px;top:1210px;font-size:15px;line-height:15px;color:#464646;letter-spacing:0.211px;-webkit-text-stroke:0.35px #464646;">Action Triggers</span>
<div style="left:21px;top:1250px;width:1887px;height:125px;border-left:1px solid #ababab;border-top:1px solid #ababab;background:#f0f0f0;box-sizing:border-box"></div>
<div style="left:22px;top:1298px;width:1886px;height:1px;background:#b4b4b4"></div>
<div style="left:22px;top:1299px;width:1886px;height:45px;background:#f7f7f7"></div>
<div style="left:22px;top:1344px;width:1886px;height:1px;background:#c0c0c0"></div>
<div style="left:22px;top:1345px;width:1886px;height:27px;background:#fff"></div>
<div style="left:22px;top:1372px;width:1886px;height:2px;background:#a8a8a8"></div>
<div style="left:790px;top:1345px;width:39px;height:27px;background:#d6d6d6"></div>
<div style="left:271px;top:1299px;width:1px;height:73px;background:#d0d0d0"></div>
<div style="left:521px;top:1299px;width:1px;height:73px;background:#d0d0d0"></div>
<div style="left:646px;top:1299px;width:1px;height:73px;background:#d0d0d0"></div>
<div style="left:707px;top:1299px;width:1px;height:73px;background:#d0d0d0"></div>
<div style="left:789px;top:1299px;width:1px;height:73px;background:#d0d0d0"></div>
<div style="left:829px;top:1299px;width:1px;height:73px;background:#d0d0d0"></div>
<div style="left:904px;top:1299px;width:1px;height:73px;background:#d0d0d0"></div>
<div style="left:979px;top:1299px;width:1px;height:73px;background:#d0d0d0"></div>
<div style="left:1054px;top:1299px;width:1px;height:73px;background:#d0d0d0"></div>
<div style="left:1129px;top:1299px;width:1px;height:73px;background:#d0d0d0"></div>
<div style="left:1205px;top:1299px;width:1px;height:73px;background:#d0d0d0"></div>
<span style="left:27.50px;top:1315px;font-size:15px;line-height:15px;color:#4e4e4e;letter-spacing:-0.350px;">Name</span>
<span style="left:277.30px;top:1315px;font-size:15px;line-height:15px;color:#4e4e4e;letter-spacing:-0.243px;">Display Name</span>
<span style="left:550.25px;top:1315px;font-size:15px;line-height:15px;color:#4e4e4e;letter-spacing:-0.141px;">Groupings</span>
<span style="left:652.00px;top:1315px;font-size:15px;line-height:15px;color:#4e4e4e;letter-spacing:-0.517px;">Type</span>
<span style="left:713.60px;top:1315px;font-size:15px;line-height:15px;color:#4e4e4e;letter-spacing:-0.122px;">Dimension</span>
<span style="left:796.00px;top:1315px;font-size:15px;line-height:15px;color:#4e4e4e;letter-spacing:0.300px;">Unit</span>
<span style="left:843.50px;top:1305px;font-size:15px;line-height:15px;color:#4e4e4e;letter-spacing:0.075px;">Default</span>
<span style="left:849.75px;top:1325px;font-size:15px;line-height:15px;color:#4e4e4e;letter-spacing:-0.444px;">Value</span>
<span style="left:914.50px;top:1305px;font-size:15px;line-height:15px;color:#4e4e4e;letter-spacing:-0.558px;">Example</span>
<span style="left:924.25px;top:1325px;font-size:15px;line-height:15px;color:#4e4e4e;letter-spacing:-0.444px;">Value</span>
<span style="left:991.00px;top:1305px;font-size:15px;line-height:15px;color:#4e4e4e;letter-spacing:-0.458px;">Copy To</span>
<span style="left:1002.50px;top:1325px;font-size:15px;line-height:15px;color:#4e4e4e;letter-spacing:-0.537px;">New</span>
<span style="left:1062.75px;top:1315px;font-size:15px;line-height:15px;color:#4e4e4e;letter-spacing:-0.403px;">Precision</span>
<span style="left:1136.00px;top:1315px;font-size:15px;line-height:15px;color:#4e4e4e;letter-spacing:-0.378px;">Tolerance</span>
<span style="left:26.40px;top:1352px;font-size:15px;line-height:15px;color:#444;letter-spacing:-0.087px;">Setting</span>
<span style="left:277.00px;top:1352px;font-size:15px;line-height:15px;color:#444;letter-spacing:-0.087px;">Setting</span>
<span style="left:651.50px;top:1352px;font-size:15px;line-height:15px;color:#444;letter-spacing:-0.030px;">Double</span>
<span style="left:713.00px;top:1352px;font-size:15px;line-height:15px;color:#444;letter-spacing:-0.232px;">Unitless</span>
<div style="left:1008px;top:1349px;width:18px;height:18px;background:#fff;border:1px solid #8c8c8c;box-sizing:border-box"></div>
<div style="left:21px;top:1343px;width:763px;height:24px;border:4px solid #ff0000;border-radius:5px;box-shadow:0 1px 1px rgba(0,0,0,.45), inset 0 1px 1px rgba(0,0,0,.35)"></div>
</body></html>
